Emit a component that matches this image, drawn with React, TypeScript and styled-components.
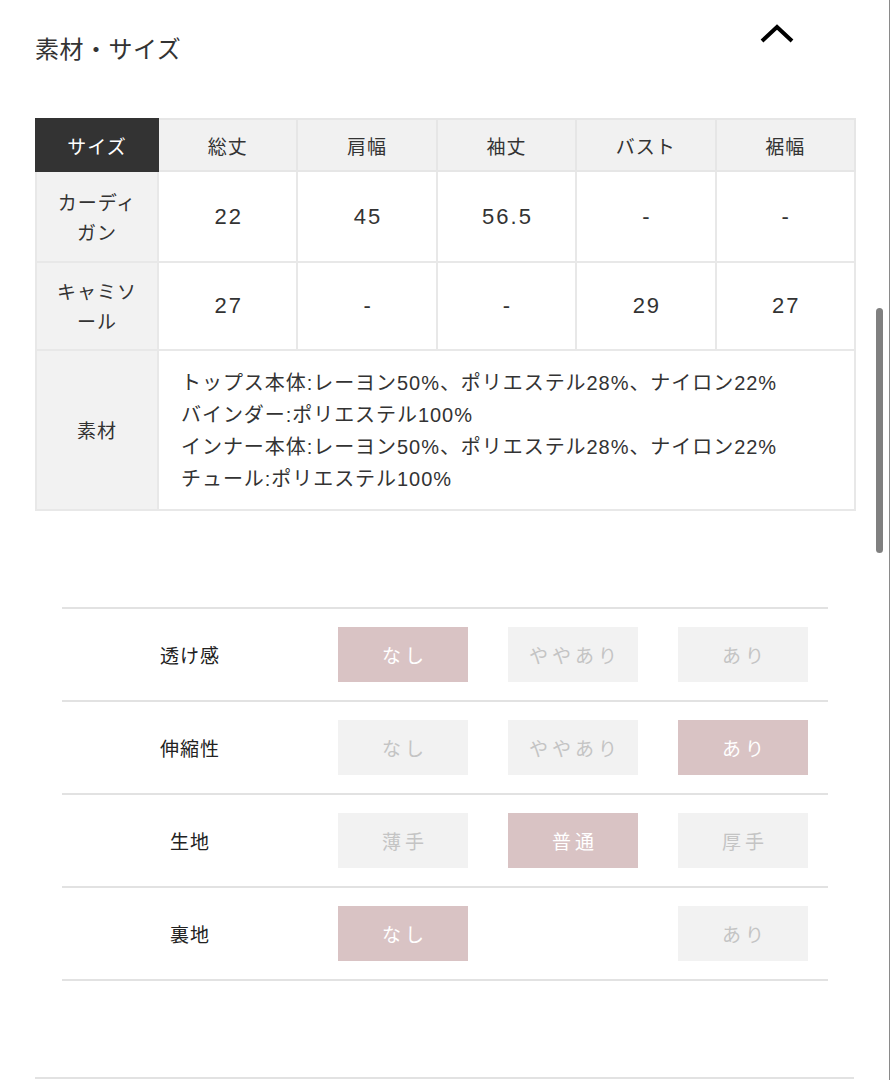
import React from "react";
import styled, { createGlobalStyle } from "styled-components";

const Global = createGlobalStyle`
  html, body { margin: 0; padding: 0; background: #fff; }
  body {
    font-family: "Noto Sans CJK JP", "Noto Sans", sans-serif;
    color: #333;
    -webkit-font-smoothing: antialiased;
  }
`;

const Page = styled.div`
  width: 890px;
  min-height: 1080px;
  border-right: 1px solid #8a8a8a;
  padding: 0 35px 0 35px;
  box-sizing: border-box;
`;

const Header = styled.div`
  display: flex;
  justify-content: space-between;
  align-items: flex-start;
  padding-top: 30px;
  height: 88px;
  box-sizing: border-box;
  margin-right: 1px;
`;

const Title = styled.h2`
  margin: 0;
  font-size: 24px;
  line-height: 36px;
  font-weight: 400;
  color: #333;
  letter-spacing: 0.5px;
`;

const Chevron = styled.svg`
  margin-top: -6px;
  margin-right: 58px;
`;

const SizeTable = styled.table`
  width: 821px;
  border-collapse: collapse;
  table-layout: fixed;
  border: 2px solid #e8e8e8;
  margin-top: 30px;
`;

const HeadCell = styled.th<{ $dark?: boolean }>`
  height: 50px;
  background: ${(p) => (p.$dark ? "#333333" : "#f1f1f1")};
  color: ${(p) => (p.$dark ? "#fff" : "#333")};
  border: 2px solid ${(p) => (p.$dark ? "#333333" : "#e6e6e6")};
  font-weight: 400;
  font-size: 19px;
  letter-spacing: 1px;
  padding: 0;
`;

const LabelCell = styled.td`
  background: #f2f2f2;
  border: 2px solid #e8e8e8;
  text-align: center;
  font-size: 19px;
  line-height: 30px;
  letter-spacing: 1px;
  padding: 0 12px;
  color: #333;
`;

const ValueCell = styled.td<{ $h: number }>`
  height: ${(p) => p.$h}px;
  border: 2px solid #e8e8e8;
  text-align: center;
  font-size: 22px;
  letter-spacing: 2px;
  padding: 0 0 0 2px;
  color: #333;
  font-family: "Liberation Sans", "Noto Sans CJK JP", sans-serif;
`;

const MaterialCell = styled.td`
  border: 2px solid #e8e8e8;
  padding: 16px 20px 14px 22px;
  font-family: "Liberation Sans", "Noto Sans CJK JP", sans-serif;
  font-size: 20px;
  letter-spacing: 0.95px;
  line-height: 32px;
  color: #333;
  height: 158px;
  box-sizing: border-box;
`;

const Spec = styled.div`
  margin: 96px 26px 0 27px;
  border-top: 2px solid #e2e2e2;
`;

const SpecRow = styled.div`
  display: grid;
  grid-template-columns: 256px repeat(3, 1fr);
  align-items: center;
  height: 91px;
  border-bottom: 2px solid #e2e2e2;
`;

const SpecLabel = styled.div`
  text-align: center;
  font-size: 19px;
  letter-spacing: 1px;
  color: #222;
`;

const Cell = styled.div`
  display: flex;
  justify-content: center;
`;

const Chip = styled.div<{ $on: boolean }>`
  width: 130px;
  height: 55px;
  display: flex;
  align-items: center;
  justify-content: center;
  background: ${(p) => (p.$on ? "#d9c3c4" : "#f2f2f2")};
  color: ${(p) => (p.$on ? "#fff" : "#c4c4c4")};
  font-size: 19px;
  letter-spacing: 4px;
  padding-left: 4px;
  box-sizing: border-box;
`;

const BottomLine = styled.div`
  margin-top: 96px;
  border-top: 2px solid #e2e2e2;
`;

const ScrollThumb = styled.div`
  position: fixed;
  left: 876px;
  top: 308px;
  width: 7px;
  height: 245px;
  border-radius: 4px;
  background: #808080;
`;

const cols = ["総丈", "肩幅", "袖丈", "バスト", "裾幅"];
const rows: { label: string[]; vals: string[]; h: number }[] = [
  { label: ["カーディ", "ガン"], vals: ["22", "45", "56.5", "-", "-"], h: 89 },
  { label: ["キャミソ", "ール"], vals: ["27", "-", "-", "29", "27"], h: 86 },
];

const materials = [
  "トップス本体:レーヨン50%、ポリエステル28%、ナイロン22%",
  "バインダー:ポリエステル100%",
  "インナー本体:レーヨン50%、ポリエステル28%、ナイロン22%",
  "チュール:ポリエステル100%",
];

type SpecItem = { label: string; opts: (string | null)[]; on: number };
const specs: SpecItem[] = [
  { label: "透け感", opts: ["なし", "ややあり", "あり"], on: 0 },
  { label: "伸縮性", opts: ["なし", "ややあり", "あり"], on: 2 },
  { label: "生地", opts: ["薄手", "普通", "厚手"], on: 1 },
  { label: "裏地", opts: ["なし", null, "あり"], on: 0 },
];

export default function App() {
  return (
    <>
      <Global />
      <Page>
        <Header>
          <Title>素材・サイズ</Title>
          <Chevron width="36" height="20" viewBox="0 0 36 20">
            <polyline points="3,17 18,3 33,17" fill="none" stroke="#000" strokeWidth="4" />
          </Chevron>
        </Header>
        <SizeTable>
          <colgroup>
            <col style={{ width: 122 }} />
            {cols.map((c) => (
              <col key={c} />
            ))}
          </colgroup>
          <thead>
            <tr>
              <HeadCell $dark>サイズ</HeadCell>
              {cols.map((c) => (
                <HeadCell key={c}>{c}</HeadCell>
              ))}
            </tr>
          </thead>
          <tbody>
            {rows.map((r) => (
              <tr key={r.label.join("")}>
                <LabelCell>
                  {r.label[0]}
                  <br />
                  {r.label[1]}
                </LabelCell>
                {r.vals.map((v, i) => (
                  <ValueCell key={i} $h={r.h}>
                    {v}
                  </ValueCell>
                ))}
              </tr>
            ))}
            <tr>
              <LabelCell>素材</LabelCell>
              <MaterialCell colSpan={5}>
                {materials.map((m) => (
                  <div key={m}>{m}</div>
                ))}
              </MaterialCell>
            </tr>
          </tbody>
        </SizeTable>
        <Spec>
          {specs.map((s) => (
            <SpecRow key={s.label}>
              <SpecLabel>{s.label}</SpecLabel>
              {s.opts.map((o, i) => (
                <Cell key={i}>{o && <Chip $on={i === s.on}>{o}</Chip>}</Cell>
              ))}
            </SpecRow>
          ))}
        </Spec>
        <BottomLine />
      </Page>
      <ScrollThumb />
    </>
  );
}
